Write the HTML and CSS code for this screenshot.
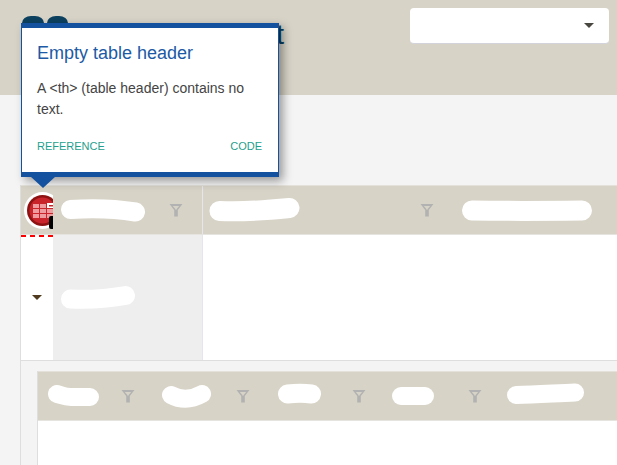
FILE: index.html
```html
<!DOCTYPE html>
<html lang="en">
<head>
<meta charset="utf-8">
<title>Table</title>
<link rel="stylesheet" href="styles.css">
</head>
<body>
<svg class="defs" width="0" height="0" aria-hidden="true">
  <symbol id="funnel" viewBox="0 0 14 14">
    <path d="M0.5 1H13.5L8.8 7V13.6H5.2V7Z M3.8 2.9 6.6 6.3V7H7.4V6.3L10.2 2.9Z" fill="#b2b2b2" fill-rule="evenodd"/>
  </symbol>
</svg>
<header class="top">
  <div class="brand">
    <svg class="logo" width="46" height="8" viewBox="0 0 46 8"><rect x="0" y="0" width="22" height="14" rx="9" fill="#0c415f"/><rect x="25" y="0" width="21" height="14" rx="9" fill="#0c415f"/></svg>
    <span class="brand-title">t</span>
  </div>
  <div class="picker"><span class="caret"></span></div>
</header>
<main class="content">
  <div class="table">
    <div class="head">
      <div class="cell-check">
        <div class="badge">
          <svg width="37" height="37" viewBox="0 0 37 37">
            <circle cx="18.5" cy="18.5" r="18.5" fill="#fff"/>
            <circle cx="18.5" cy="18.5" r="15.5" fill="#8e1212"/>
            <circle cx="18.5" cy="18.5" r="13" fill="#c9242b"/>
            <g fill="#ee9c9f">
              <rect x="9" y="12" width="6" height="4"/><rect x="16" y="12" width="6" height="4"/>
              <rect x="9" y="17" width="6" height="4"/><rect x="16" y="17" width="6" height="4"/><rect x="23" y="17" width="6" height="4"/>
              <rect x="9" y="22" width="6" height="4"/><rect x="16" y="22" width="6" height="4"/><rect x="23" y="22" width="6" height="4"/>
            </g>
            <rect x="23" y="11" width="8" height="5" fill="#fff"/>
            <rect x="25" y="13" width="6" height="1.5" fill="#c9242b"/>
            <rect x="25" y="24" width="8" height="13" rx="2" fill="#000"/>
          </svg>
        </div>
      </div>
      <div class="cell-a">
        <svg class="blob blob-a" viewBox="0 0 84 26"><path d="M9.500 12.500C30 11 50 11 74.500 15" stroke-width="19"/></svg>
        <svg class="funnel funnel-a"><use href="#funnel"/></svg>
      </div>
      <div class="cell-b">
        <svg class="blob blob-b" viewBox="0 0 91 26"><path d="M10.500 14C30 15 50 14 80.500 11" stroke-width="20"/></svg>
        <svg class="funnel funnel-b"><use href="#funnel"/></svg>
        <svg class="blob blob-c" viewBox="0 0 130 26"><path d="M10 13.500C40 14 80 14 120 13.500" stroke-width="20"/></svg>
      </div>
    </div>
    <div class="row">
      <div class="row-toggle"><span class="arrow"></span></div>
      <div class="row-key">
        <svg class="blob blob-d" viewBox="0 0 74 26"><path d="M9.500 14C30 15 50 13 64.500 10.500" stroke-width="19"/></svg>
      </div>
    </div>
    <div class="nested-wrap">
      <div class="nested">
        <div class="nested-head">
          <svg class="blob n1" viewBox="0 0 52 26"><path d="M10 11C14 12 18 14 24 14L43 14" stroke-width="18"/></svg>
          <svg class="funnel f1"><use href="#funnel"/></svg>
          <svg class="blob n2" viewBox="0 0 49 26"><path d="M9 12Q24 20 40 11" stroke-width="18"/></svg>
          <svg class="funnel f2"><use href="#funnel"/></svg>
          <svg class="blob n3" viewBox="0 0 43 26"><path d="M9.500 11C20 10 25 10 33.500 11" stroke-width="19"/></svg>
          <svg class="funnel f3"><use href="#funnel"/></svg>
          <svg class="blob n4" viewBox="0 0 42 26"><path d="M9 13H33" stroke-width="18"/></svg>
          <svg class="funnel f4"><use href="#funnel"/></svg>
          <svg class="blob n5" viewBox="0 0 77 26"><path d="M9 12C30 12 50 10 68 9.500" stroke-width="18"/></svg>
        </div>
      </div>
    </div>
  </div>
</main>
<aside class="tip">
  <h2 class="tip-title">Empty table header</h2>
  <p class="tip-text">A &lt;th&gt; (table header) contains no text.</p>
  <div class="tip-links"><span>REFERENCE</span><span>CODE</span></div>
  <span class="tip-arrow"></span>
</aside>
</body>
</html>
```
FILE: styles.css
```css
* { box-sizing: border-box; }
html, body { margin: 0; height: 100%; overflow: hidden; }
body { background: #f4f4f4; font-family: "Liberation Sans", Arial, sans-serif; }
.defs { position: absolute; }

.top { height: 95px; background: #d7d3c7; display: flex; justify-content: space-between; align-items: flex-start; padding: 8px 8px 0 22px; }
.brand { display: flex; align-items: flex-start; width: 262px; justify-content: space-between; padding-top: 8px; }
.logo { display: block; }
.brand-title { font-size: 28px; line-height: 28px; color: #0c415f; margin-top: 5px; }
.picker { width: 199px; height: 36px; background: #fff; border-radius: 4px; border-bottom: 1px solid #d3d3dc; display: flex; align-items: center; justify-content: flex-end; padding-right: 15px; }
.caret { width: 0; height: 0; border-left: 5px solid transparent; border-right: 5px solid transparent; border-top: 5px solid #4a4640; }

.content { padding: 90px 0 0 20px; }
.table { border-left: 1px solid #dedede; background: #fff; }
.head { height: 50px; display: flex; background: #d7d3c7; border-top: 1px solid #e3e1da; border-bottom: 1px solid #e6e4de; }
.cell-check { width: 32px; flex: none; position: relative; overflow: hidden; }
.badge { position: absolute; left: 3px; top: 6px; }
.badge svg { display: block; }
.cell-a { width: 150px; flex: none; display: flex; align-items: center; padding-left: 8px; border-right: 1px solid #e4e6ea; }
.cell-b { flex: 1; min-width: 0; display: flex; align-items: center; padding-left: 6px; }
.blob { display: block; height: 26px; flex: none; }
.blob path { fill: none; stroke: #fff; stroke-linecap: round; stroke-linejoin: round; }
.funnel { width: 14px; height: 14px; flex: none; display: block; }
.blob-a { width: 84px; }
.funnel-a { margin-left: 24px; }
.blob-b { width: 91px; }
.funnel-b { margin-left: 120px; }
.blob-c { width: 130px; margin-left: 28px; }

.row { height: 126px; display: flex; background: #fff; border-bottom: 1px solid #dedede; }
.row-toggle { width: 32px; flex: none; display: flex; align-items: center; justify-content: center; background: repeating-linear-gradient(90deg, #f00 0 5px, transparent 5px 9px) top left / 100% 2px no-repeat; }
.arrow { width: 0; height: 0; border-left: 5px solid transparent; border-right: 5px solid transparent; border-top: 5px solid #4f3a1e; }
.row-key { width: 150px; flex: none; background: #eeeeee; border-right: 1px solid #e4e6ea; display: flex; align-items: center; padding-left: 8px; }
.blob-d { width: 74px; }

.nested-wrap { background: #f4f4f4; padding: 10px 0 0 16px; height: 120px; }
.nested { background: #fff; border-left: 1px solid #dedede; height: 100%; }
.nested-head { height: 50px; background: #d7d3c7; border-top: 1px solid #e3e1da; border-bottom: 1px solid #e6e4de; display: flex; align-items: center; padding-left: 9px; }
.n1 { width: 52px; }
.f1 { margin-left: 22px; }
.n2 { width: 49px; margin-left: 27px; }
.f2 { margin-left: 25px; }
.n3 { width: 43px; margin-left: 28px; }
.f3 { margin-left: 31px; }
.n4 { width: 42px; margin-left: 26px; }
.f4 { margin-left: 34px; }
.n5 { width: 77px; margin-left: 25px; }

.tip { position: absolute; left: 21px; top: 23px; width: 258px; height: 154px; background: #fff; border: 1px solid #14529f; border-top-width: 5px; border-bottom-width: 5px; box-shadow: 4px 4px 9px rgba(0,0,0,.38); padding: 13px 16px 0 15px; }
.tip-title { margin: 0; font-size: 18px; line-height: 24px; font-weight: 400; color: #1c5aa5; }
.tip-text { margin: 13px 0 0; font-size: 14px; line-height: 21px; color: #444; }
.tip-links { display: flex; justify-content: space-between; margin-top: 19px; font-size: 11px; line-height: 14px; color: #1fa08e; }
.tip-arrow { position: absolute; left: 8px; top: 148px; width: 0; height: 0; border-left: 13px solid transparent; border-right: 13px solid transparent; border-top: 12px solid #14529f; }
```
